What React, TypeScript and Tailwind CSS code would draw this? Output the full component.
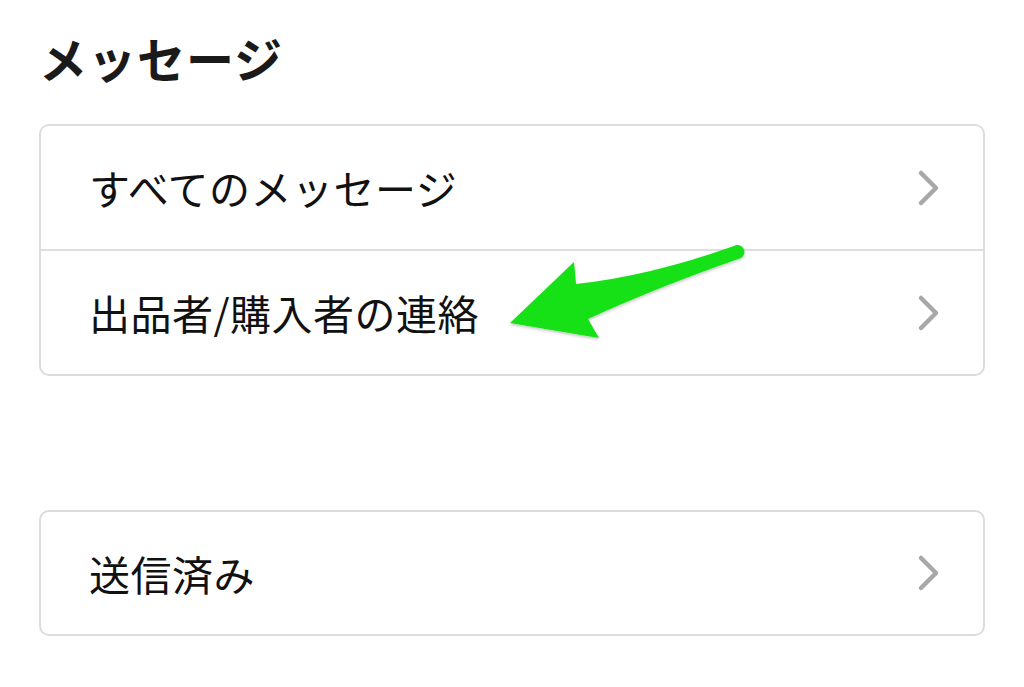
import { ReactNode } from 'react'

const FONT = '"Noto Sans CJK JP", "Noto Sans", sans-serif'

function Chevron() {
  return (
    <svg width="26" height="38" viewBox="0 0 26 38" className="shrink-0">
      <path d="M6 4 L21 19 L6 34" fill="none" stroke="#a8a8a8" strokeWidth="4.5" strokeLinecap="round" strokeLinejoin="round" />
    </svg>
  )
}

function Row({ children, last }: { children: ReactNode; last?: boolean }) {
  return (
    <div
      className={
        'flex items-center justify-between pl-[48px] pr-[42px] ' +
        (last ? 'h-[123px]' : 'h-[125px] border-b-2 border-[#dedede]')
      }
    >
      <span className="text-[41px] leading-none tracking-[0.5px] text-[#111]">{children}</span>
      <Chevron />
    </div>
  )
}

export default function App() {
  return (
    <div className="relative min-h-[687px] w-full bg-white px-[39px]" style={{ fontFamily: FONT }}>
      <h1 className="pt-[33px] text-[48px] font-bold leading-none tracking-[1px] text-[#1a1a1a]">メッセージ</h1>

      <div className="mt-[43px] overflow-hidden rounded-[10px] border-2 border-[#dcdcdc]">
        <Row>すべてのメッセージ</Row>
        <Row last>出品者/購入者の連絡</Row>
      </div>

      <div className="mt-[134px] overflow-hidden rounded-[10px] border-2 border-[#dcdcdc]">
        <div className="flex h-[122px] items-center justify-between pl-[48px] pr-[42px]">
          <span className="text-[41px] leading-none tracking-[0.5px] text-[#111]">送信済み</span>
          <Chevron />
        </div>
      </div>

      {/* annotation arrow */}
      <svg className="pointer-events-none absolute left-0 top-0" width="1024" height="687" viewBox="0 0 1024 687">
        <defs>
          <filter id="sh" x="-10%" y="-10%" width="120%" height="130%">
            <feDropShadow dx="0" dy="1.5" stdDeviation="1.5" floodColor="#000" floodOpacity="0.25" />
          </filter>
        </defs>
        <path
          d="M510 323 L574 262 L576 284 Q650 276 734 246 A6.5 6.5 0 0 1 741 258 Q655 288 588 319 L599 338 Z"
          fill="#14e014"
          filter="url(#sh)"
        />
      </svg>
    </div>
  )
}
